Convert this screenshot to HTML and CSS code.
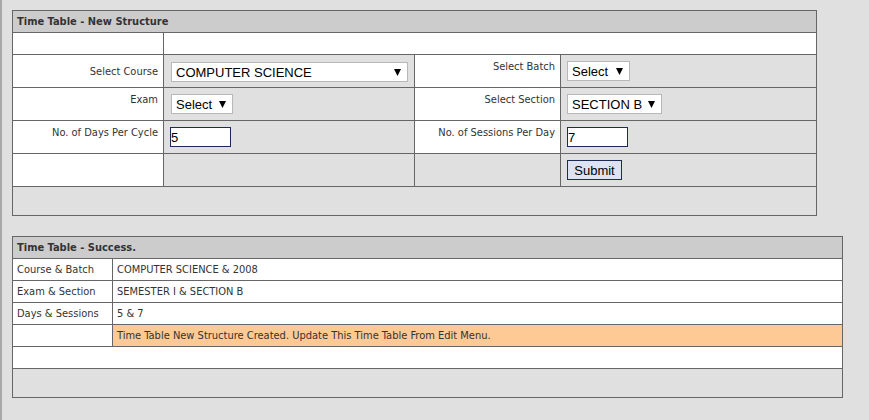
FILE: index.html
```html
<!DOCTYPE html>
<html>
<head>
<meta charset="utf-8">
<link rel="stylesheet" href="styles.css">
</head>
<body>
<div class="page">
  <div class="panel form-panel">
    <div class="cell head span4">Time Table - New Structure</div>

    <div class="cell white short"></div>
    <div class="cell white short span3"></div>

    <div class="cell white label mid">Select Course</div>
    <div class="cell ctrl"><select class="sel sel-course"><option>COMPUTER SCIENCE</option></select></div>
    <div class="cell white label">Select Batch</div>
    <div class="cell ctrl"><select class="sel sel-batch"><option>Select</option></select></div>

    <div class="cell white label">Exam</div>
    <div class="cell ctrl"><select class="sel sel-exam"><option>Select</option></select></div>
    <div class="cell white label">Select Section</div>
    <div class="cell ctrl"><select class="sel sel-section"><option>SECTION B</option></select></div>

    <div class="cell white label">No. of Days Per Cycle</div>
    <div class="cell ctrl"><input class="txt" type="text" value="5"></div>
    <div class="cell white label">No. of Sessions Per Day</div>
    <div class="cell ctrl"><input class="txt" type="text" value="7"></div>

    <div class="cell white"></div>
    <div class="cell"></div>
    <div class="cell"></div>
    <div class="cell ctrl"><button class="btn" type="button">Submit</button></div>

    <div class="cell foot span4"></div>
  </div>

  <div class="panel result-panel">
    <div class="cell head span2">Time Table - Success.</div>

    <div class="cell white row">Course &amp; Batch</div>
    <div class="cell white row">COMPUTER SCIENCE &amp; 2008</div>

    <div class="cell white row">Exam &amp; Section</div>
    <div class="cell white row">SEMESTER I &amp; SECTION B</div>

    <div class="cell white row">Days &amp; Sessions</div>
    <div class="cell white row">5 &amp; 7</div>

    <div class="cell white row"></div>
    <div class="cell note row">Time Table New Structure Created. Update This Time Table From Edit Menu.</div>

    <div class="cell white row span2"></div>

    <div class="cell foot span2"></div>
  </div>
</div>
</body>
</html>
```

FILE: styles.css
```css
html, body {
  margin: 0;
  padding: 0;
  background: #e0e0e0;
  min-height: 100%;
}
body {
  font-family: "DejaVu Sans Condensed", "Liberation Sans", Arial, sans-serif;
  font-size: 11px;
  color: #333;
  border-left: 2px solid #a8a8a8;
  box-sizing: border-box;
  height: 420px;
}
.page {
  padding: 10px 0 0 10px;
}
.panel {
  display: grid;
  gap: 1px;
  padding: 1px;
  background: #666;
  box-sizing: border-box;
}
.form-panel {
  width: 805px;
  grid-template-columns: 150px 250px 145px 255px;
  grid-template-rows: 21px 21px 32px 32px 32px 32px 28px;
}
.result-panel {
  width: 831px;
  margin-top: 20px;
  grid-template-columns: 99px 729px;
  grid-template-rows: 21px 21px 21px 21px 21px 21px 28px;
}
.cell {
  background: #e0e0e0;
  min-width: 0;
}
.span4 { grid-column: span 4; }
.span3 { grid-column: span 3; }
.span2 { grid-column: span 2; }
.white { background: #fff; }

.head {
  background: #cccccc;
  font-weight: bold;
  padding-left: 4px;
  display: flex;
  align-items: center;
  color: #333;
}
.label {
  text-align: right;
  padding: 5px 5px 0 0;
}
.label.mid {
  display: flex;
  align-items: center;
  justify-content: flex-end;
  padding-top: 0;
}
.ctrl {
  display: flex;
  align-items: center;
  padding-left: 6px;
}

.sel {
  -webkit-appearance: none;
  appearance: none;
  font-family: "Liberation Sans", Arial, sans-serif;
  font-size: 13px;
  color: #000;
  height: 20px;
  box-sizing: border-box;
  border: 1px solid #b8b8b8;
  background: #fff url("data:image/svg+xml;utf8,<svg xmlns='http://www.w3.org/2000/svg' width='7' height='7'><path d='M0 0H7L3.5 7Z' fill='black'/></svg>") no-repeat right 6px center;
  padding: 0 14px 0 4px;
  margin: 0;
  border-radius: 0;
  outline: none;
}
.sel-course { width: 237px; margin-left: 1px; margin-top: 2px; }
.sel-exam { width: 62px; margin-left: 1px; }
.sel-batch { width: 63px; }
.sel-section { width: 95px; }

.txt {
  width: 61px;
  height: 20px;
  box-sizing: border-box;
  border: 1px solid #1d2b5b;
  font-family: "Liberation Sans", Arial, sans-serif;
  font-size: 13px;
  color: #000;
  padding: 0;
  margin: 0;
  background: #fff;
  outline: none;
}
.btn {
  height: 20px;
  width: 55px;
  box-sizing: border-box;
  padding: 0;
  border: 1px solid #1d2b5b;
  background: #dde3f1;
  font-family: "Liberation Sans", Arial, sans-serif;
  font-size: 13px;
  color: #000;
  border-radius: 0;
}

.row {
  display: flex;
  align-items: center;
  padding-left: 4px;
  white-space: nowrap;
}
.note { background: #fdc994; }
.foot { background: #e0e0e0; }
```
